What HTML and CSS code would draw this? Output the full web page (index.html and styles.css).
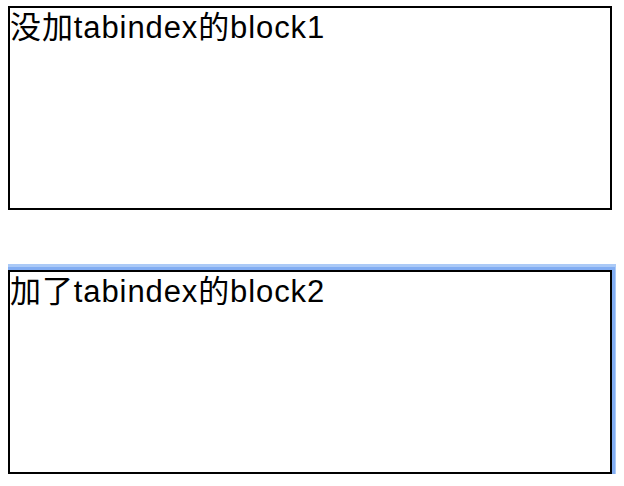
FILE: index.html
```html
<!DOCTYPE html>
<html>
<head>
<meta charset="utf-8">
<link rel="stylesheet" href="styles.css">
</head>
<body>
<div class="block">没加tabindex的block1</div>
<div class="block focused" tabindex="0">加了tabindex的block2</div>
</body>
</html>
```

FILE: styles.css
```css
html, body {
  background: #fff;
}
body {
  margin: 6px 8px;
  font-family: "Liberation Sans", "Noto Sans CJK SC", sans-serif;
  font-size: 31px;
  line-height: 40px;
  color: #000;
}
.block {
  width: 600px;
  height: 200px;
  border: 2px solid #000;
  box-sizing: content-box;
  letter-spacing: 0.9px;
}
.block + .block {
  margin-top: 60px;
}
.focused {
  outline: none;
  box-shadow: 0 0 0 3px #82adf2, 0 0 0 6px #abcaf7;
}
```
